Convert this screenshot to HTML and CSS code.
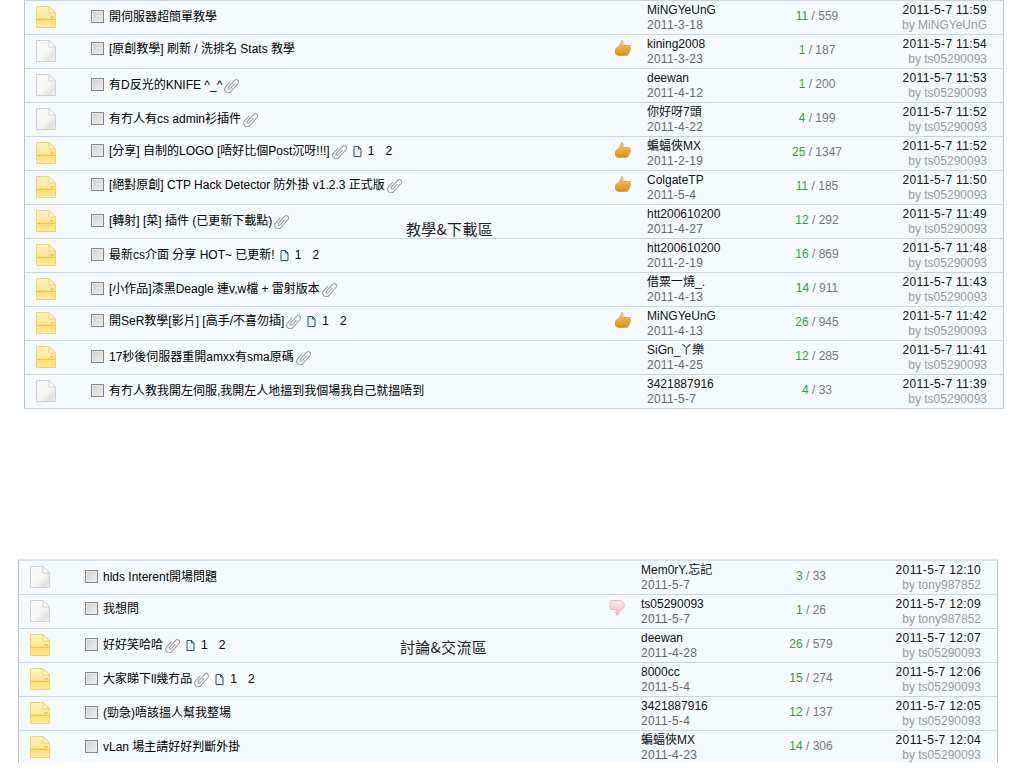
FILE: index.html
```html
<!DOCTYPE html>
<html lang="zh-Hant">
<head>
<meta charset="utf-8">
<title>論壇</title>
<link rel="stylesheet" href="styles.css">
</head>
<body>
<svg class="defs" width="0" height="0" aria-hidden="true">
  <defs>
    <linearGradient id="gy" x1="0" y1="0" x2="0" y2="1"><stop offset="0" stop-color="#fff2c0"/><stop offset=".55" stop-color="#ffe89a"/><stop offset=".56" stop-color="#ffdf70"/><stop offset="1" stop-color="#ffec98"/></linearGradient>
    <linearGradient id="gw" x1="0" y1="0" x2="1" y2="1"><stop offset="0" stop-color="#fbfbfb"/><stop offset=".55" stop-color="#f6f6f4"/><stop offset=".8" stop-color="#e2e2e2"/><stop offset="1" stop-color="#f4f4f4"/></linearGradient>
    <linearGradient id="gt" x1="0" y1="0" x2="0" y2="1"><stop offset="0" stop-color="#f8d070"/><stop offset="1" stop-color="#dd8a10"/></linearGradient>
    <linearGradient id="gd" x1="0" y1="0" x2="0" y2="1"><stop offset="0" stop-color="#fde6e8"/><stop offset="1" stop-color="#f8c0c8"/></linearGradient>
    <symbol id="folder-new" viewBox="0 0 20 22">
      <path d="M.5.5H13L19.500 7V21.500H.5Z" fill="url(#gy)" stroke="#f2cf6a"/>
      <path d="M13 .5V7H19.500Z" fill="#fff6d0" stroke="#f2cf6a"/>
      <path d="M1 13.500H19" stroke="#ecc355"/>
      <path d="M14 11H18" stroke="#e9a93a"/>
    </symbol>
    <symbol id="folder-old" viewBox="0 0 20 22">
      <path d="M.5.5H13L19.500 7V21.500H.5Z" fill="url(#gw)" stroke="#cfcfcf"/>
      <path d="M13 .5V7H19.500Z" fill="#fff" stroke="#cfcfcf"/>
    </symbol>
    <symbol id="clip" viewBox="0 0 14 14">
      <g transform="rotate(42 7 7)">
        <path d="M4 6V12A3 3 0 0 0 10 12V2.500A2 2 0 0 0 6 2.500V10.500A1 1 0 0 0 8 10.500V5" fill="none" stroke="#9a9a9a" stroke-width=".9"/>
      </g>
    </symbol>
    <symbol id="page" viewBox="0 0 9 11">
      <path d="M1 .5H5.500L8 3V10.500H1Z" fill="#eef4fb" stroke="#23508f"/>
      <path d="M5.500 .5V3H8" fill="none" stroke="#23508f"/>
    </symbol>
    <symbol id="up" viewBox="0 0 16 16">
      <path d="M6.500 .5C8 .5 8.500 2 8 3.500L7.500 5.500H14C15.500 5.500 16 7 15 8C15.800 9 15.500 10.500 14.500 11C14.800 12 14.300 13 13.300 13.500C13.300 14.800 12.500 15.500 11.300 15.500H4C1.500 15.500 0 14 0 11.500C0 9 1.500 7.800 3 7C4.500 5.500 6 3 6.500 .5Z" fill="url(#gt)" stroke="#c9821c" stroke-width=".5"/>
    </symbol>
    <symbol id="down" viewBox="0 0 16 16">
      <path d="M2 .5H10C12 .5 14 1 14.800 3C15.500 5 15.500 7 14 8.500C12.500 9 10.500 11 9.500 14C9 15.500 7.500 15.500 7 14C6.800 12.500 7 11 7.500 9.500H2.500C1 9.500 .5 8 1.300 7C.5 6 .7 4.800 1.500 4.300C1 3 1 1.500 2 .5Z" fill="url(#gd)" stroke="#f09aa8" stroke-width=".6"/>
    </symbol>
  </defs>
</svg>

<section class="board first">
  <div class="row"><svg class="folder"><use href="#folder-new"/></svg><div class="subject"><span class="check"></span><a>開伺服器超簡單教學</a></div><div class="rec"></div><div class="author"><b>MiNGYeUnG</b><i>2011-3-18</i></div><div class="count"><em>11</em> / 559</div><div class="last"><b>2011-5-7 11:59</b><i>by MiNGYeUnG</i></div></div>
  <div class="row lifted"><svg class="folder"><use href="#folder-old"/></svg><div class="subject"><span class="check"></span><a>[原創教學] 刷新 / 洗排名 Stats 教學</a></div><div class="rec"><svg class="thumb"><use href="#up"/></svg></div><div class="author"><b>kining2008</b><i>2011-3-23</i></div><div class="count"><em>1</em> / 187</div><div class="last"><b>2011-5-7 11:54</b><i>by ts05290093</i></div></div>
  <div class="row"><svg class="folder"><use href="#folder-old"/></svg><div class="subject"><span class="check"></span><a>有D反光的KNIFE ^_^</a><svg class="clip"><use href="#clip"/></svg></div><div class="rec"></div><div class="author"><b>deewan</b><i>2011-4-12</i></div><div class="count"><em>1</em> / 200</div><div class="last"><b>2011-5-7 11:53</b><i>by ts05290093</i></div></div>
  <div class="row"><svg class="folder"><use href="#folder-old"/></svg><div class="subject"><span class="check"></span><a>有冇人有cs admin衫插件</a><svg class="clip"><use href="#clip"/></svg></div><div class="rec"></div><div class="author"><b>你好呀7頭</b><i>2011-4-22</i></div><div class="count"><em>4</em> / 199</div><div class="last"><b>2011-5-7 11:52</b><i>by ts05290093</i></div></div>
  <div class="row lifted"><svg class="folder"><use href="#folder-new"/></svg><div class="subject"><span class="check"></span><a>[分享] 自制的LOGO [唔好比個Post沉呀!!!]</a><svg class="clip"><use href="#clip"/></svg><span class="pages"><svg class="page"><use href="#page"/></svg><a>1</a><a>2</a></span></div><div class="rec"><svg class="thumb"><use href="#up"/></svg></div><div class="author"><b>蝙蝠俠MX</b><i>2011-2-19</i></div><div class="count"><em>25</em> / 1347</div><div class="last"><b>2011-5-7 11:52</b><i>by ts05290093</i></div></div>
  <div class="row lifted"><svg class="folder"><use href="#folder-new"/></svg><div class="subject"><span class="check"></span><a>[絕對原創] CTP Hack Detector 防外掛 v1.2.3 正式版</a><svg class="clip"><use href="#clip"/></svg></div><div class="rec"><svg class="thumb"><use href="#up"/></svg></div><div class="author"><b>ColgateTP</b><i>2011-5-4</i></div><div class="count"><em>11</em> / 185</div><div class="last"><b>2011-5-7 11:50</b><i>by ts05290093</i></div></div>
  <div class="row"><svg class="folder"><use href="#folder-new"/></svg><div class="subject"><span class="check"></span><a>[轉射] [菜] 插件 (已更新下載點)</a><svg class="clip"><use href="#clip"/></svg></div><div class="rec"></div><div class="author"><b>htt200610200</b><i>2011-4-27</i></div><div class="count"><em>12</em> / 292</div><div class="last"><b>2011-5-7 11:49</b><i>by ts05290093</i></div></div>
  <div class="row"><svg class="folder"><use href="#folder-new"/></svg><div class="subject"><span class="check"></span><a>最新cs介面 分享 HOT~ 已更新!</a><span class="pages"><svg class="page"><use href="#page"/></svg><a>1</a><a>2</a></span></div><div class="rec"></div><div class="author"><b>htt200610200</b><i>2011-2-19</i></div><div class="count"><em>16</em> / 869</div><div class="last"><b>2011-5-7 11:48</b><i>by ts05290093</i></div></div>
  <div class="row"><svg class="folder"><use href="#folder-new"/></svg><div class="subject"><span class="check"></span><a>[小作品]漆黑Deagle 連v,w檔 + 雷射版本</a><svg class="clip"><use href="#clip"/></svg></div><div class="rec"></div><div class="author"><b>借粟一燒_.</b><i>2011-4-13</i></div><div class="count"><em>14</em> / 911</div><div class="last"><b>2011-5-7 11:43</b><i>by ts05290093</i></div></div>
  <div class="row lifted"><svg class="folder"><use href="#folder-new"/></svg><div class="subject"><span class="check"></span><a>開SeR教學[影片] [高手/不喜勿插]</a><svg class="clip"><use href="#clip"/></svg><span class="pages"><svg class="page"><use href="#page"/></svg><a>1</a><a>2</a></span></div><div class="rec"><svg class="thumb"><use href="#up"/></svg></div><div class="author"><b>MiNGYeUnG</b><i>2011-4-13</i></div><div class="count"><em>26</em> / 945</div><div class="last"><b>2011-5-7 11:42</b><i>by ts05290093</i></div></div>
  <div class="row"><svg class="folder"><use href="#folder-new"/></svg><div class="subject"><span class="check"></span><a>17秒後伺服器重開amxx有sma原碼</a><svg class="clip"><use href="#clip"/></svg></div><div class="rec"></div><div class="author"><b>SiGn_丫樂</b><i>2011-4-25</i></div><div class="count"><em>12</em> / 285</div><div class="last"><b>2011-5-7 11:41</b><i>by ts05290093</i></div></div>
  <div class="row"><svg class="folder"><use href="#folder-old"/></svg><div class="subject"><span class="check"></span><a>有冇人教我開左伺服,我開左人地搵到我個場我自己就搵唔到</a></div><div class="rec"></div><div class="author"><b>3421887916</b><i>2011-5-7</i></div><div class="count"><em>4</em> / 33</div><div class="last"><b>2011-5-7 11:39</b><i>by ts05290093</i></div></div>
  <p class="caption cap-one">教學&amp;下載區</p>
</section>

<section class="board second">
  <div class="row"><svg class="folder"><use href="#folder-old"/></svg><div class="subject"><span class="check"></span><a>hlds Interent開場問題</a></div><div class="rec"></div><div class="author"><b>Mem0rY.忘記</b><i>2011-5-7</i></div><div class="count"><em>3</em> / 33</div><div class="last"><b>2011-5-7 12:10</b><i>by tony987852</i></div></div>
  <div class="row lifted"><svg class="folder"><use href="#folder-old"/></svg><div class="subject"><span class="check"></span><a>我想問</a></div><div class="rec"><svg class="thumb"><use href="#down"/></svg></div><div class="author"><b>ts05290093</b><i>2011-5-7</i></div><div class="count"><em>1</em> / 26</div><div class="last"><b>2011-5-7 12:09</b><i>by tony987852</i></div></div>
  <div class="row"><svg class="folder"><use href="#folder-new"/></svg><div class="subject"><span class="check"></span><a>好好笑哈哈</a><svg class="clip"><use href="#clip"/></svg><span class="pages"><svg class="page"><use href="#page"/></svg><a>1</a><a>2</a></span></div><div class="rec"></div><div class="author"><b>deewan</b><i>2011-4-28</i></div><div class="count"><em>26</em> / 579</div><div class="last"><b>2011-5-7 12:07</b><i>by ts05290093</i></div></div>
  <div class="row"><svg class="folder"><use href="#folder-new"/></svg><div class="subject"><span class="check"></span><a>大家睇下ll幾冇品</a><svg class="clip"><use href="#clip"/></svg><span class="pages"><svg class="page"><use href="#page"/></svg><a>1</a><a>2</a></span></div><div class="rec"></div><div class="author"><b>8000cc</b><i>2011-5-4</i></div><div class="count"><em>15</em> / 274</div><div class="last"><b>2011-5-7 12:06</b><i>by ts05290093</i></div></div>
  <div class="row"><svg class="folder"><use href="#folder-new"/></svg><div class="subject"><span class="check"></span><a>(勁急)唔該搵人幫我整場</a></div><div class="rec"></div><div class="author"><b>3421887916</b><i>2011-5-4</i></div><div class="count"><em>12</em> / 137</div><div class="last"><b>2011-5-7 12:05</b><i>by ts05290093</i></div></div>
  <div class="row"><svg class="folder"><use href="#folder-new"/></svg><div class="subject"><span class="check"></span><a>vLan 場主請好好判斷外掛</a></div><div class="rec"></div><div class="author"><b>蝙蝠俠MX</b><i>2011-4-23</i></div><div class="count"><em>14</em> / 306</div><div class="last"><b>2011-5-7 12:04</b><i>by ts05290093</i></div></div>
  <p class="caption cap-two">討論&amp;交流區</p>
</section>
</body>
</html>
```

FILE: styles.css
```css
html, body {
  margin: 0;
  padding: 0;
  background: #fff;
}

body {
  font: 12px/15px "Liberation Sans", "Noto Sans CJK TC", sans-serif;
  color: #000;
  height: 776px;
  overflow: hidden;
}

.defs {
  position: absolute;
}

.board {
  position: relative;
  box-sizing: border-box;
  width: 980px;
  border-left: 1px solid #b8c4ce;
  border-right: 1px solid #b8c4ce;
}

.first {
  margin-left: 24px;
  border-top: 1px solid #c8d5e0;
}

.second {
  margin-left: 18px;
  margin-top: 150px;
  height: 204px;
  overflow: hidden;
  border-top: 2px solid #d4e2ed;
}

.row {
  display: grid;
  grid-template-columns: 65px 525px 32px 120px 100px 120px;
  align-items: center;
  box-sizing: border-box;
  height: 34px;
  background: #f5fafe;
  border-bottom: 1px solid #c8d5e0;
}

.folder {
  width: 20px;
  height: 22px;
  margin-left: 11px;
  margin-bottom: 2px;
}

.subject {
  display: flex;
  align-items: center;
  white-space: nowrap;
}

.lifted .subject {
  padding-bottom: 4px;
}

.check {
  box-sizing: border-box;
  flex: none;
  width: 13px;
  height: 13px;
  margin-left: 1px;
  margin-right: 5px;
  margin-bottom: 2px;
  border: 1px solid #868686;
  background: linear-gradient(135deg, #cfcfcf, #f0f0f0);
  box-shadow: inset 0 0 0 1px #e8e8e8;
}

.clip {
  flex: none;
  width: 16px;
  height: 16px;
  margin-left: 2px;
  margin-bottom: 2px;
}

.pages {
  display: flex;
  align-items: center;
  margin-left: 5px;
}

.page {
  width: 9px;
  height: 11px;
  margin-right: 6px;
}

.pages a {
  margin-right: 11px;
}

.rec {
  display: flex;
  justify-content: flex-start;
}

.thumb {
  width: 16px;
  height: 16px;
  margin-top: -8px;
}

.author,
.last {
  display: flex;
  flex-direction: column;
}

.author b,
.last b {
  font-weight: normal;
  color: #111;
}

.author i,
.last i {
  font-style: normal;
  color: #666;
  letter-spacing: .25px;
}

.last {
  text-align: right;
}

.last b {
  letter-spacing: .35px;
}

.last i {
  color: #999;
  letter-spacing: 0;
}

.count {
  text-align: center;
  color: #777;
  padding-bottom: 2px;
}

.count em {
  font-style: normal;
  color: #3c9a32;
}

.caption {
  position: absolute;
  margin: 0;
  font: 15px/16px "Noto Sans CJK TC", sans-serif;
  letter-spacing: .3px;
  color: #222;
}

.cap-one {
  left: 381px;
  top: 220px;
}

.cap-two {
  left: 381px;
  top: 78px;
}
```
